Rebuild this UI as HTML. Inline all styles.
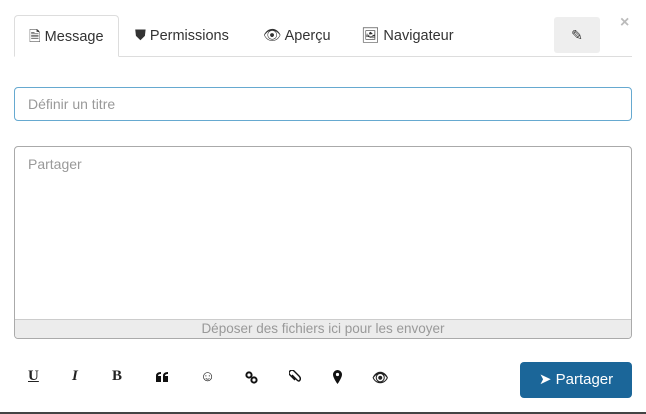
<!DOCTYPE html>
<html><head><style>
*{box-sizing:border-box;margin:0;padding:0}
body{width:646px;height:414px;background:#fff;font-family:"Liberation Sans",sans-serif;position:relative;overflow:hidden;color:#333}
.a{position:absolute}
.tabs{left:14px;top:56px;width:618px;height:1px;background:#ddd}
.tab{position:absolute;top:15px;height:42px;font-size:14.5px;line-height:42px;color:#333;white-space:nowrap}
.act{left:14px;width:105px;border:1px solid #ddd;border-bottom:1px solid #fff;border-radius:4px 4px 0 0;background:#fff;padding-left:14px}
.inp{left:14px;top:87px;width:618px;height:34px;border:1px solid #66a9d0;border-radius:4px;font-size:14px;color:#999;padding:8px 13px}
.ta{left:14px;top:146px;width:618px;height:193px;border:1px solid #aaa;border-radius:4px;overflow:hidden}
.ta .ph{position:absolute;left:13px;top:9px;font-size:14px;color:#999}
.dz{position:absolute;left:0;bottom:0;width:100%;height:19px;background:#ececec;border-top:1px solid #ccc;text-align:center;font-size:13.5px;color:#999;line-height:18px}
.ic{position:absolute;top:368px;font-size:15px;color:#222;font-weight:bold}
svg.s{position:absolute}
.btn{left:520px;top:362px;width:112px;height:36px;background:#1b6699;border-radius:4px;color:#fff;font-size:15px;line-height:36px;text-align:center}
</style></head><body>
<div class="a tabs"></div>
<div class="tab act">🗎 Message</div>
<div class="tab" style="left:135px">⛊ Permissions</div>
<div class="tab" style="left:263px">👁 Aperçu</div>
<div class="tab" style="left:361px">🖼 Navigateur</div>
<div class="a" style="left:554px;top:17px;width:46px;height:36px;background:#eee;border-radius:3px;text-align:center;line-height:36px;font-size:14px">✎</div>
<div class="a" style="left:620px;top:14px;font-size:16px;color:#bbb;font-weight:bold">×</div>
<div class="a inp">Définir un titre</div>
<div class="a ta"><div class="ph">Partager</div><div class="dz">Déposer des fichiers ici pour les envoyer</div></div>
<div class="ic" style="left:28px;font-family:'Liberation Serif';text-decoration:underline">U</div>
<div class="ic" style="left:72px;font-family:'Liberation Serif';font-style:italic">I</div>
<div class="ic" style="left:112px;font-family:'Liberation Serif'">B</div>
<svg class="s" style="left:156px;top:372px" width="13" height="10" viewBox="0 0 13 10"><path d="M0 4Q0 0 5 0V2Q2 2 2 4H5V10H0ZM7 4Q7 0 12 0V2Q9 2 9 4H12V10H7Z" fill="#111"/></svg>
<div class="ic" style="left:200px;font-weight:normal">☺</div>
<svg class="s" style="left:245px;top:371px" width="13" height="13" viewBox="0 0 13 13"><circle cx="4" cy="4" r="2.6" fill="none" stroke="#111" stroke-width="2"/><circle cx="9" cy="9" r="2.6" fill="none" stroke="#111" stroke-width="2"/></svg>
<svg class="s" style="left:289px;top:370px" width="12" height="14" viewBox="0 0 12 14"><path d="M3 5L8 10Q10 12 11 10Q12 8 10 6L5 1Q3 -1 1 1Q-1 3 1 5L6 10" fill="none" stroke="#111" stroke-width="1.4"/></svg>
<svg class="s" style="left:333px;top:370px" width="9" height="14" viewBox="0 0 9 14"><path d="M4.5 0A4.5 4.5 0 0 0 0 4.5C0 8 4.5 14 4.5 14S9 8 9 4.5A4.5 4.5 0 0 0 4.5 0Z" fill="#111"/><circle cx="4.5" cy="4.5" r="1.6" fill="#fff"/></svg>
<div class="ic" style="left:372px;font-size:13px;top:370px">👁</div>
<div class="a btn">➤ Partager</div>
<div class="a" style="left:0;top:412px;width:646px;height:2px;background:#444"></div>
</body></html>
